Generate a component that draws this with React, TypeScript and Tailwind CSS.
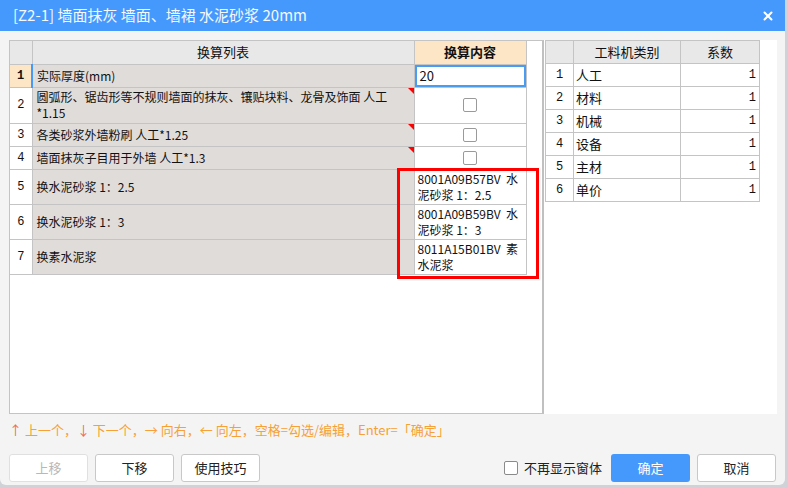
import { X } from "lucide-react";

const cjk = { fontFamily: '"Noto Sans CJK SC", "Noto Sans", sans-serif' };
const song = { fontFamily: '"Liberation Mono", "Noto Sans CJK SC", monospace' };

type Row = { n: number; desc: React.ReactNode; h: string; mark?: boolean; content?: React.ReactNode; check?: boolean };

const rows: Row[] = [
  { n: 1, desc: "实际厚度(mm)", h: "h-[23px]" },
  { n: 2, desc: <>圆弧形、锯齿形等不规则墙面的抹灰、镶贴块料、龙骨及饰面 人工<br />*1.15</>, h: "h-[36px]", mark: true, check: true },
  { n: 3, desc: "各类砂浆外墙粉刷 人工*1.25", h: "h-[23px]", mark: true, check: true },
  { n: 4, desc: "墙面抹灰子目用于外墙 人工*1.3", h: "h-[23px]", mark: true, check: true },
  { n: 5, desc: "换水泥砂浆 1：2.5", h: "h-[35px]", content: <>8001A09B57BV{"  "}水<br />泥砂浆 1：2.5</> },
  { n: 6, desc: "换水泥砂浆 1：3", h: "h-[35px]", content: <>8001A09B59BV{"  "}水<br />泥砂浆 1：3</> },
  { n: 7, desc: "换素水泥浆", h: "h-[35px]", content: <>8011A15B01BV{"  "}素<br />水泥浆</> },
];

const cats = ["人工", "材料", "机械", "设备", "主材", "单价"];

function Btn({ children, disabled, primary }: { children: React.ReactNode; disabled?: boolean; primary?: boolean }) {
  return (
    <button
      className={
        primary
          ? "w-[79px] h-[28px] rounded-[3px] bg-[#4599fd] text-white text-[13px]"
          : disabled
          ? "w-[79px] h-[28px] rounded-[3px] bg-white border border-[#e0e0e0] text-[#b8b8b8] text-[13px]"
          : "w-[79px] h-[28px] rounded-[3px] bg-white border border-[#c8c8c8] text-[#222] text-[13px]"
      }
    >
      {children}
    </button>
  );
}

export default function App() {
  return (
    <div className="w-[788px] h-[488px] bg-[#cfd3d8] overflow-hidden" style={cjk}>
      <div className="w-[785px] h-[485px] bg-[#f4f4f4] rounded-b-[6px] flex flex-col overflow-hidden">
        {/* title bar */}
        <div className="h-[31px] bg-[#4599fd] flex items-center justify-between pl-[13px] pr-[10px] text-[15px] text-[#f4f8ff]">
          <span>[Z2-1] 墙面抹灰 墙面、墙裙 水泥砂浆 20mm</span>
          <X size={14} strokeWidth={3.5} className="text-white" />
        </div>

        <div className="flex pt-[9px] pl-[9px]">
          {/* left panel */}
          <div className="relative w-[535px] h-[374px] bg-white border-l border-t border-b border-[#c4c4c4] border-r-2 border-r-[#c0c0c0]">
            <table className="border-collapse text-[12px] text-[#111] leading-[16px]" style={cjk}>
              <thead>
                <tr className="h-[23px]">
                  <th className="w-[22px] bg-[#e8e8e8] border-r border-b border-[#c4c4c4]" />
                  <th className="w-[382px] bg-[#e8e8e8] border-r border-b border-[#c4c4c4] font-normal text-[13px]">换算列表</th>
                  <th className="w-[112px] bg-[#fde6c6] border-r border-b border-[#c4c4c4] font-bold text-[13px]">换算内容</th>
                </tr>
              </thead>
              <tbody>
                {rows.map((r) => (
                  <tr key={r.n} className={r.h}>
                    <td
                      className={
                        r.n === 1
                          ? "bg-[#fde6c6] border-r-2 border-r-[#4599fd] border-b border-b-[#c4c4c4] text-center font-bold"
                          : "bg-white border-r border-b border-[#c4c4c4] text-center"
                      }
                      style={song}
                    >
                      {r.n}
                    </td>
                    <td className="relative bg-[#e0dcda] border-r border-b border-[#c4c4c4] px-[4px] align-middle">
                      {r.desc}
                      {r.mark && (
                        <span className="absolute top-0 right-0 w-0 h-0 border-t-[6px] border-t-[#ff0000] border-l-[6px] border-l-transparent" />
                      )}
                    </td>
                    <td className="bg-white border-r border-b border-[#c4c4c4] p-0 align-middle">
                      {r.n === 1 && (
                        <div className="h-[22px] border-2 border-[#4a9cf0] flex items-center px-[3px] text-[13px]">20</div>
                      )}
                      {r.check && (
                        <div className="flex justify-center">
                          <span className="w-[14px] h-[14px] border border-[#9a9a9a] rounded-[2px] bg-white" />
                        </div>
                      )}
                      {r.content && <div className="px-[3px] text-[12px] whitespace-pre">{r.content}</div>}
                    </td>
                  </tr>
                ))}
              </tbody>
            </table>
            {/* red annotation frame */}
            <div className="absolute left-[387px] top-[127px] w-[142px] h-[111px] border-[3px] border-[#ff0000]" />
          </div>

          {/* right panel */}
          <div className="w-[233px] h-[374px] bg-white pl-[1px]">
            <table className="border-collapse text-[12px] text-[#111] leading-[16px]">
              <thead>
                <tr className="h-[23px]">
                  <th className="w-[28px] bg-[#e8e8e8] border border-[#c4c4c4]" />
                  <th className="w-[107px] bg-[#e8e8e8] border border-[#c4c4c4] font-normal text-[13px]">工料机类别</th>
                  <th className="w-[79px] bg-[#e8e8e8] border border-[#c4c4c4] font-normal text-[13px]">系数</th>
                </tr>
              </thead>
              <tbody>
                {cats.map((c, i) => (
                  <tr key={c} className="h-[23px]">
                    <td className="border border-[#c4c4c4] text-center" style={song}>{i + 1}</td>
                    <td className="border border-[#c4c4c4] px-[2px] text-[13px]">{c}</td>
                    <td className="border border-[#c4c4c4] text-right pr-[3px]" style={song}>1</td>
                  </tr>
                ))}
              </tbody>
            </table>
          </div>
        </div>

        {/* hint */}
        <div className="pl-[9px] mt-[7px] h-[18px] text-[13px] text-[#f7a034] leading-[18px]">
          <span className="text-[#f26a4f]">↑</span> 上一个，<span className="text-[#f26a4f]">↓</span> 下一个，→ 向右，← 向左，空格=勾选/编辑，Enter=「确定」
        </div>

        {/* footer */}
        <div className="flex items-center pl-[9px] pr-[9px] mt-[15px]">
          <div className="flex gap-[7px]">
            <Btn disabled>上移</Btn>
            <Btn>下移</Btn>
            <Btn>使用技巧</Btn>
          </div>
          <div className="ml-auto flex items-center">
            <span className="w-[14px] h-[14px] border border-[#8a8a8a] rounded-[2px] bg-white" />
            <span className="ml-[6px] text-[13px] text-[#222]">不再显示窗体</span>
            <div className="ml-[9px] flex gap-[7px]">
              <Btn primary>确定</Btn>
              <Btn>取消</Btn>
            </div>
          </div>
        </div>
      </div>
    </div>
  );
}
